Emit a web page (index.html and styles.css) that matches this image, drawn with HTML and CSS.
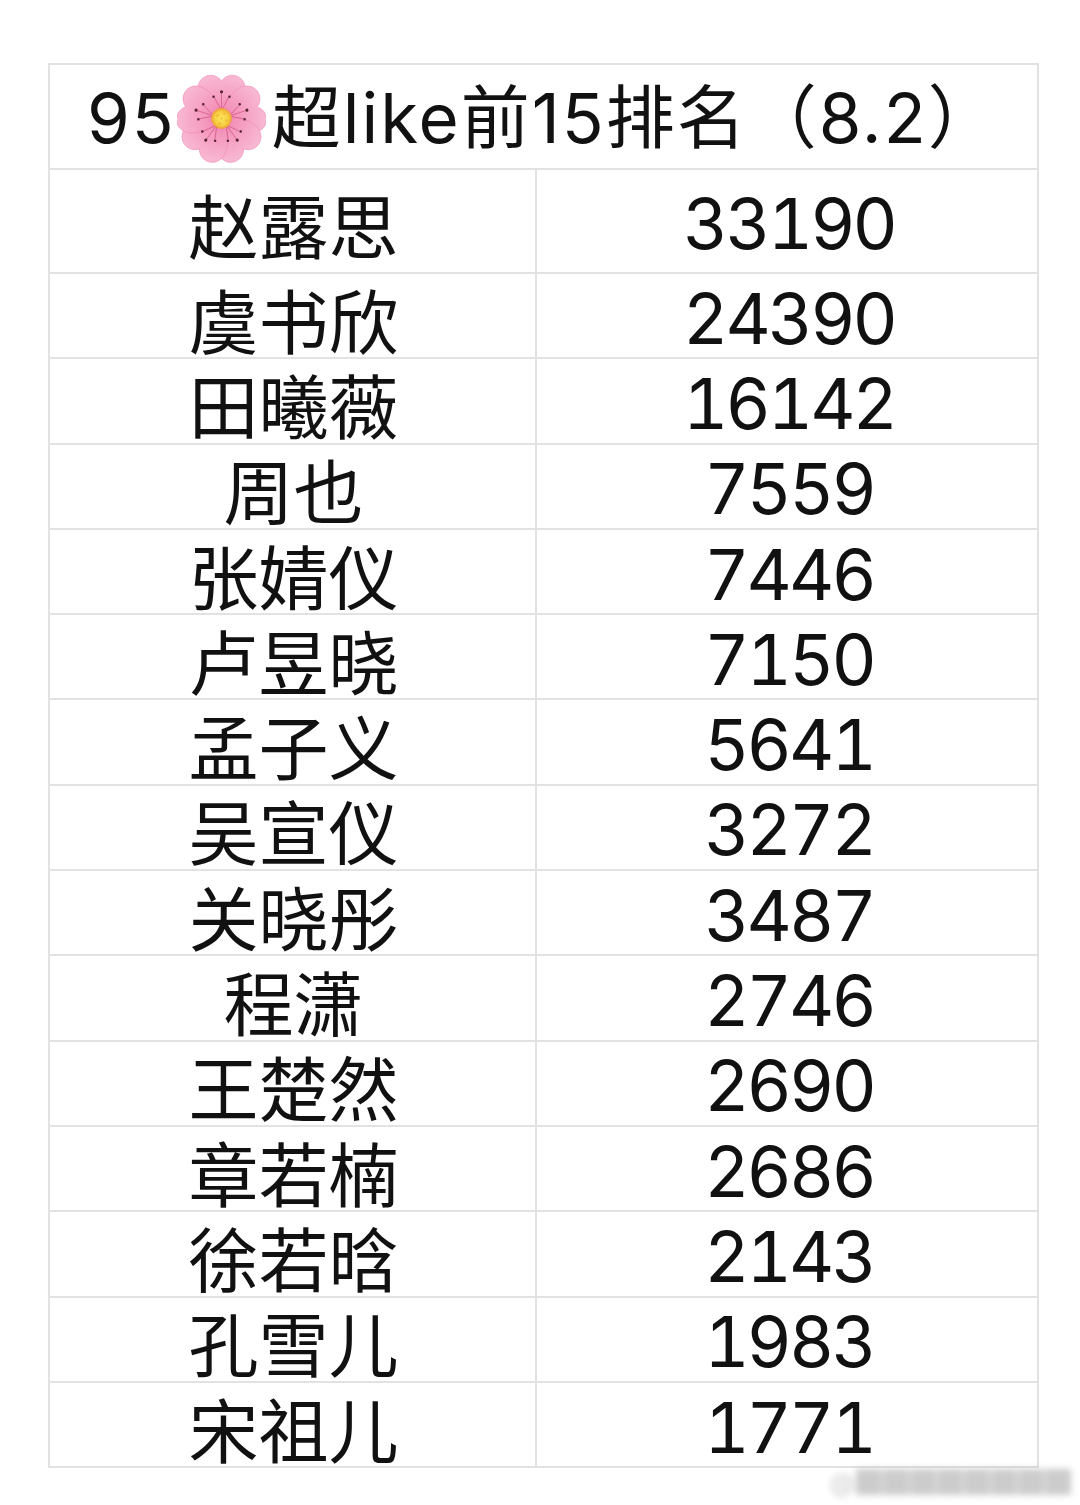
FILE: index.html
```html
<!DOCTYPE html>
<html lang="zh-CN">
<head>
<meta charset="utf-8">
<title>95超like前15排名</title>
<link rel="stylesheet" href="styles.css">
</head>
<body>
<div class="page">
  <div class="sheet">
    <div class="title">95<svg class="blossom" viewBox="-45 -45 90 90" aria-hidden="true">
        <defs>
          <radialGradient id="pg" cx="0" cy="0" r="45" gradientUnits="userSpaceOnUse">
            <stop offset="0" stop-color="#ec6a9e"/>
            <stop offset="0.3" stop-color="#f494bb"/>
            <stop offset="1" stop-color="#f8b9d3"/>
          </radialGradient>
          <radialGradient id="cg" cx="0" cy="0" r="10" gradientUnits="userSpaceOnUse">
            <stop offset="0" stop-color="#fbe660"/>
            <stop offset="0.7" stop-color="#f6cf3e"/>
            <stop offset="1" stop-color="#eea23c"/>
          </radialGradient>
          <path id="petal" d="M0,-2 C-18,-8 -30,-27 -21,-39 C-15,-46 -5,-45 0,-38 C5,-45 15,-46 21,-39 C30,-27 18,-8 0,-2 Z"/>
        </defs>
        <g fill="url(#pg)" stroke="#f08ab5" stroke-width="0.6">
          <use href="#petal"/>
          <use href="#petal" transform="rotate(72)"/>
          <use href="#petal" transform="rotate(144)"/>
          <use href="#petal" transform="rotate(216)"/>
          <use href="#petal" transform="rotate(288)"/>
        </g>
        <g stroke="#c2406e" stroke-width="0.7" fill="none" opacity="0.75">
          <path d="M0,-8 L0,-26 M0,-8 L-7,-21 M0,-8 L7,-21"/>
          <path d="M0,-8 L0,-26 M0,-8 L-7,-21 M0,-8 L7,-21" transform="rotate(72)"/>
          <path d="M0,-8 L0,-26 M0,-8 L-7,-21 M0,-8 L7,-21" transform="rotate(144)"/>
          <path d="M0,-8 L0,-26 M0,-8 L-7,-21 M0,-8 L7,-21" transform="rotate(216)"/>
          <path d="M0,-8 L0,-26 M0,-8 L-7,-21 M0,-8 L7,-21" transform="rotate(288)"/>
        </g>
        <g fill="#5a2433">
          <circle cx="0" cy="-27" r="1.6"/><circle cx="-8" cy="-22" r="1.3"/><circle cx="8" cy="-22" r="1.3"/>
          <g transform="rotate(72)"><circle cx="0" cy="-27" r="1.6"/><circle cx="-8" cy="-22" r="1.3"/><circle cx="8" cy="-22" r="1.3"/></g>
          <g transform="rotate(144)"><circle cx="0" cy="-27" r="1.6"/><circle cx="-8" cy="-22" r="1.3"/><circle cx="8" cy="-22" r="1.3"/></g>
          <g transform="rotate(216)"><circle cx="0" cy="-27" r="1.6"/><circle cx="-8" cy="-22" r="1.3"/><circle cx="8" cy="-22" r="1.3"/></g>
          <g transform="rotate(288)"><circle cx="0" cy="-27" r="1.6"/><circle cx="-8" cy="-22" r="1.3"/><circle cx="8" cy="-22" r="1.3"/></g>
        </g>
        <circle cx="0" cy="0" r="10.5" fill="url(#cg)"/>
        <g fill="#f3b93a">
          <circle cx="-4" cy="-3" r="1.3"/><circle cx="3" cy="-5" r="1.2"/><circle cx="5" cy="2" r="1.3"/><circle cx="-2" cy="5" r="1.2"/><circle cx="0" cy="0" r="1.1"/>
        </g>
      </svg>超like前15排名（8.2）</div>
    <div class="row first"><div class="name">赵露思</div><div class="num">33190</div></div>
    <div class="row"><div class="name">虞书欣</div><div class="num">24390</div></div>
    <div class="row"><div class="name">田曦薇</div><div class="num">16142</div></div>
    <div class="row"><div class="name">周也</div><div class="num">7559</div></div>
    <div class="row"><div class="name">张婧仪</div><div class="num">7446</div></div>
    <div class="row"><div class="name">卢昱晓</div><div class="num">7150</div></div>
    <div class="row"><div class="name">孟子义</div><div class="num">5641</div></div>
    <div class="row"><div class="name">吴宣仪</div><div class="num">3272</div></div>
    <div class="row"><div class="name">关晓彤</div><div class="num">3487</div></div>
    <div class="row"><div class="name">程潇</div><div class="num">2746</div></div>
    <div class="row"><div class="name">王楚然</div><div class="num">2690</div></div>
    <div class="row"><div class="name">章若楠</div><div class="num">2686</div></div>
    <div class="row"><div class="name">徐若晗</div><div class="num">2143</div></div>
    <div class="row"><div class="name">孔雪儿</div><div class="num">1983</div></div>
    <div class="row"><div class="name">宋祖儿</div><div class="num">1771</div></div>
  </div>
  <div class="watermark">@████████</div>
</div>
</body>
</html>
```

FILE: styles.css
```css
* {
  box-sizing: border-box;
}

html, body {
  margin: 0;
  padding: 0;
  background: #ffffff;
}

body {
  font-family: "Inter", "Noto Sans CJK SC", sans-serif;
  color: #111111;
}

.page {
  position: relative;
  width: 1080px;
  height: 1505px;
  padding: 63px 0 0 48px;
  overflow: hidden;
}

.sheet {
  width: 991px;
  border-left: 2px solid #e2e2e2;
  border-right: 2px solid #e2e2e2;
  border-bottom: 2px solid #e2e2e2;
}

.title {
  height: 105px;
  border-top: 2px solid #e2e2e2;
  display: flex;
  align-items: center;
  padding: 4px 0 0 37px;
  font-size: 69px;
  line-height: 1;
  white-space: nowrap;
  letter-spacing: 2px;
}

.blossom {
  width: 89px;
  height: 89px;
  margin: 0 6px 0 1px;
  flex: none;
}

.row {
  display: grid;
  grid-template-columns: 487px 1fr;
  height: 85.3px;
  border-top: 2px solid #e2e2e2;
}

.row.first {
  height: 104px;
}

.name,
.num {
  display: flex;
  align-items: center;
  justify-content: center;
  padding-top: 6px;
  font-size: 70px;
  line-height: 1;
  white-space: nowrap;
}

.name {
  border-right: 2px solid #e2e2e2;
  font-family: "Noto Sans CJK SC", sans-serif;
  padding-left: 2px;
}

.num {
  padding-left: 4px;
  font-variant-numeric: tabular-nums;
  letter-spacing: -3px;
}

.watermark {
  position: absolute;
  left: 830px;
  top: 1462px;
  font-size: 26px;
  color: #9a9a9a;
  filter: blur(3px);
  opacity: 0.5;
  letter-spacing: 1px;
}
```
